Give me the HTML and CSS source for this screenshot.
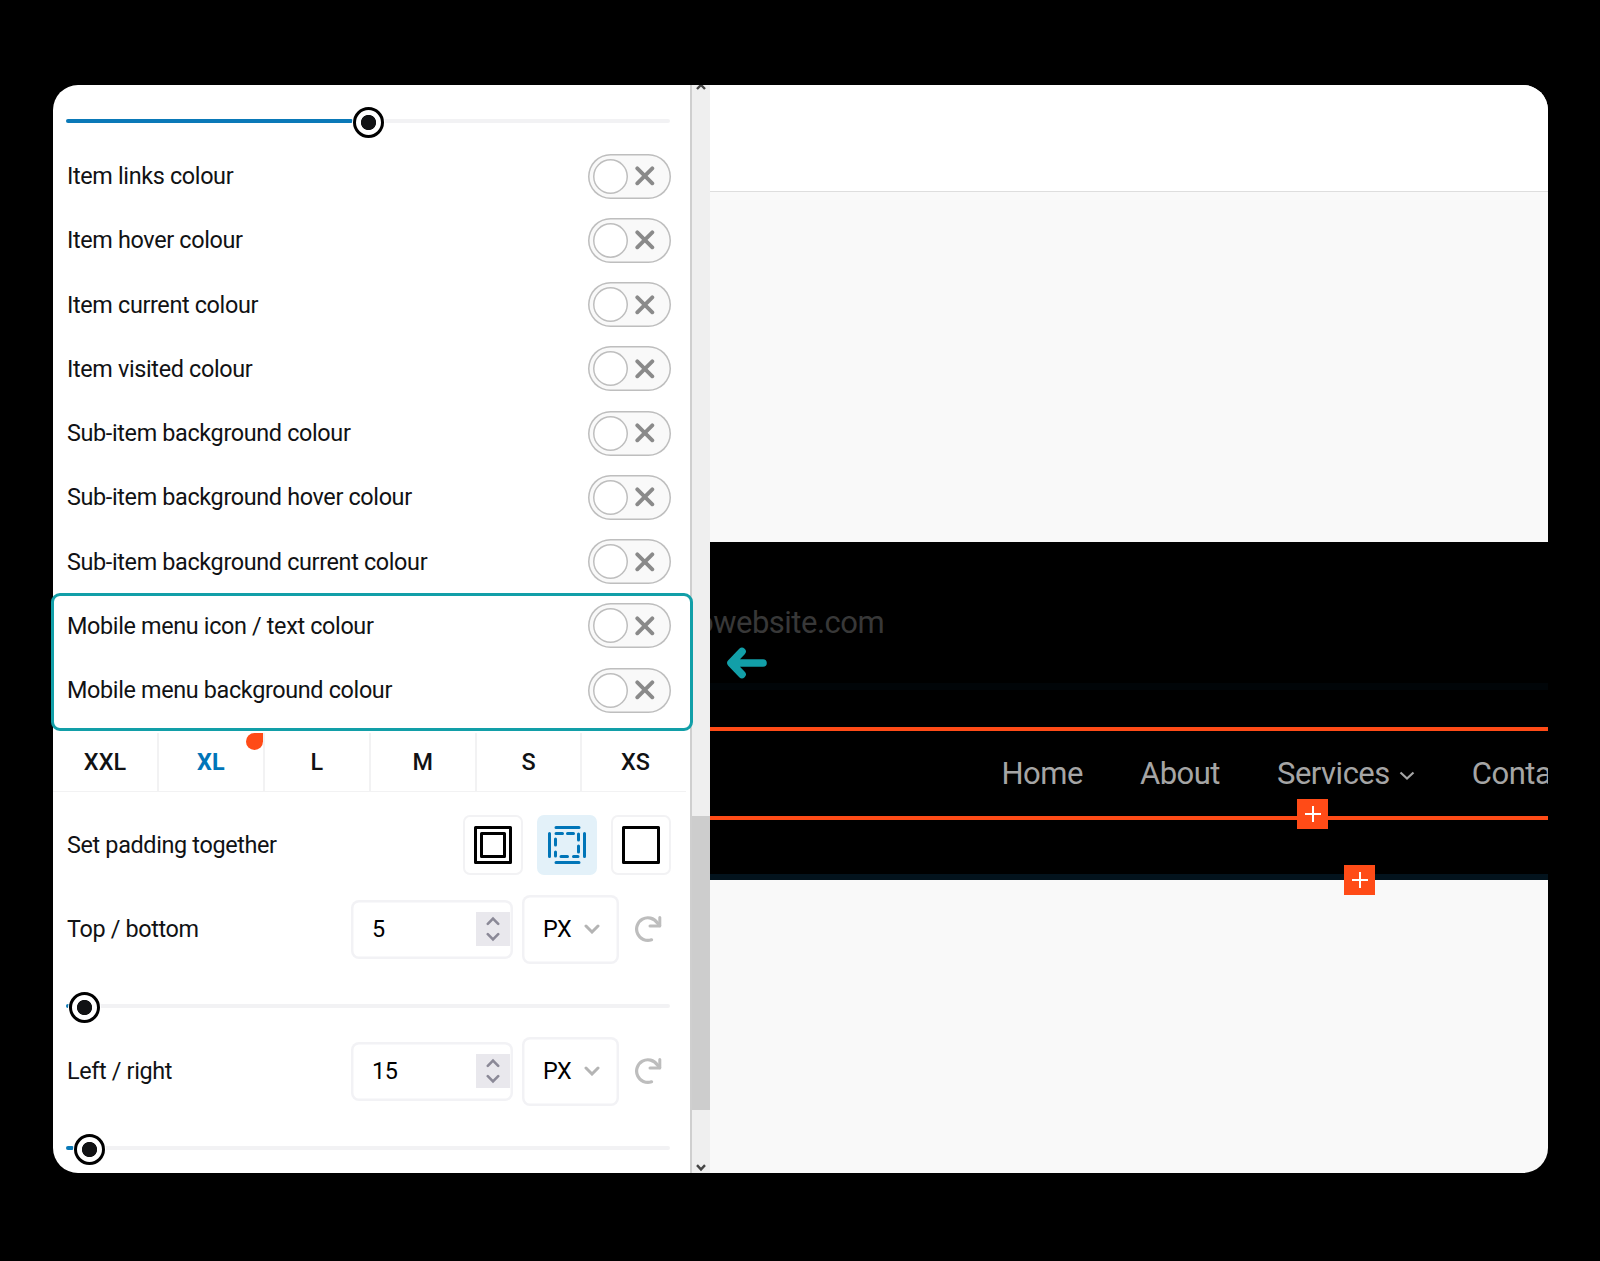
FILE: index.html
```html
<!DOCTYPE html>
<html lang="en">
<head>
    <meta charset="UTF-8">
    <title>Menu settings</title>
    <link rel="stylesheet" href="styles.css">
</head>
<body>

<svg class="sprite">
    <symbol id="cross" viewBox="0 0 20 20">
        <path d="M2.3 2.3L17.3 17.3M17.3 2.3L2.3 17.3" fill="none" stroke="#8a8a8a" stroke-width="3.9" stroke-linecap="round"/>
    </symbol>
    <symbol id="chevron" viewBox="0 0 16 10">
        <path d="M2 2L8 8L14 2" fill="none" stroke="currentColor" stroke-width="3" stroke-linecap="round"/>
    </symbol>
    <symbol id="caret" viewBox="0 0 16 10">
        <path d="M1.5 1.5L8 7.5L14.5 1.5" fill="none" stroke="currentColor" stroke-width="2.2"/>
    </symbol>
    <symbol id="spin" viewBox="0 0 14 26">
        <path d="M1.8 7.8L7 2.6L12.2 7.8M1.8 18.2L7 23.4L12.2 18.2" fill="none" stroke="#8b8997" stroke-width="2.6" stroke-linecap="round"/>
    </symbol>
    <symbol id="reset" viewBox="0 0 27 28">
        <path d="M16.5 24.8A11.3 11.3 0 1 1 22.3 7.8L24.5 10.5" fill="none" stroke="#bdbdbd" stroke-width="3.2" stroke-linecap="round"/>
        <path d="M24.8 2.5V11H15" fill="none" stroke="#bdbdbd" stroke-width="3" stroke-linecap="round" stroke-linejoin="round"/>
    </symbol>
    <symbol id="plus" viewBox="0 0 16 16">
        <path d="M8 0V16M0 8H16" stroke="#fff" stroke-width="2"/>
    </symbol>
</svg>

<div class="window">
    <section class="panel">
        <div class="slider first">
            <div class="fill" style="width: 287px"></div>
            <div class="thumb" style="left: 287px"></div>
        </div>

        <div class="row"><span>Item links colour</span><div class="toggle"><i></i><svg><use href="#cross"/></svg></div></div>
        <div class="row"><span>Item hover colour</span><div class="toggle"><i></i><svg><use href="#cross"/></svg></div></div>
        <div class="row"><span>Item current colour</span><div class="toggle"><i></i><svg><use href="#cross"/></svg></div></div>
        <div class="row"><span>Item visited colour</span><div class="toggle"><i></i><svg><use href="#cross"/></svg></div></div>
        <div class="row"><span>Sub-item background colour</span><div class="toggle"><i></i><svg><use href="#cross"/></svg></div></div>
        <div class="row"><span>Sub-item background hover colour</span><div class="toggle"><i></i><svg><use href="#cross"/></svg></div></div>
        <div class="row"><span>Sub-item background current colour</span><div class="toggle"><i></i><svg><use href="#cross"/></svg></div></div>
        <div class="highlight">
            <div class="row"><span>Mobile menu icon / text colour</span><div class="toggle"><i></i><svg><use href="#cross"/></svg></div></div>
            <div class="row"><span>Mobile menu background colour</span><div class="toggle"><i></i><svg><use href="#cross"/></svg></div></div>
        </div>

        <div class="tabs">
            <a>XXL</a>
            <a class="active">XL</a>
            <a>L</a>
            <a>M</a>
            <a>S</a>
            <a>XS</a>
        </div>

        <div class="padding-row">
            <span>Set padding together</span>
            <div class="choices">
                <div class="choice">
                    <svg width="38" height="38" viewBox="0 0 38 38">
                        <path d="M1.5 1.5H36.5V36.5H1.5ZM7.5 7.5H30.5V30.5H7.5Z" fill="none" stroke="#000" stroke-width="3" stroke-linejoin="round"/>
                    </svg>
                </div>
                <div class="choice selected">
                    <svg width="38" height="38" viewBox="0 0 38 38">
                        <path d="M8 1.5H31M8 36.5H31M1.5 7.5V30.5M36.5 7.5V30.5M8 7.5H14.5M19.5 7.5H25.5M30.5 8V14M30.5 20V26M30 30.5H25.5M19.5 30.5H13M7.5 30V26M7.5 19V13" fill="none" stroke="#0075b8" stroke-width="3" stroke-linecap="round"/>
                    </svg>
                </div>
                <div class="choice">
                    <svg width="38" height="38" viewBox="0 0 38 38">
                        <path d="M1.5 1.5H36.5V36.5H1.5Z" fill="none" stroke="#000" stroke-width="3" stroke-linejoin="round"/>
                    </svg>
                </div>
            </div>
        </div>

        <div class="field">
            <span>Top / bottom</span>
            <div class="number">5<div class="spinner"><svg><use href="#spin"/></svg></div></div>
            <div class="unit">PX<svg><use href="#chevron"/></svg></div>
            <svg class="reset"><use href="#reset"/></svg>
        </div>
        <div class="slider">
            <div class="fill" style="width: 5px"></div>
            <div class="thumb" style="left: 3px"></div>
        </div>

        <div class="field second">
            <span>Left / right</span>
            <div class="number">15<div class="spinner"><svg><use href="#spin"/></svg></div></div>
            <div class="unit">PX<svg><use href="#chevron"/></svg></div>
            <svg class="reset"><use href="#reset"/></svg>
        </div>
        <div class="slider">
            <div class="fill" style="width: 8px"></div>
            <div class="thumb" style="left: 8.5px"></div>
        </div>
    </section>

    <div class="scrollbar">
        <svg class="up" width="10" height="5" viewBox="0 0 10 5"><path d="M1 4L5 0L9 4" fill="none" stroke="#444" stroke-width="2.4"/></svg>
        <div class="bar"></div>
        <svg class="down" width="10" height="9" viewBox="0 0 10 9"><path d="M1 1.2L5 5.4L9 1.2" fill="none" stroke="#444" stroke-width="2.4"/></svg>
    </div>

    <section class="preview">
        <div class="topbar"></div>
        <div class="space"></div>
        <div class="site">
            <div class="contact">
                <p>owebsite.com</p>
                <svg class="arrow" width="42" height="32" viewBox="0 0 42 32"><path d="M16 4.5L5 16L16 27.5M6 16H37" fill="none" stroke="#129fa8" stroke-width="7.6" stroke-linecap="round" stroke-linejoin="round"/></svg>
            </div>
            <div class="divider"></div>
            <nav>
                <a>Home</a>
                <a>About</a>
                <a>Services<svg><use href="#caret"/></svg></a>
                <a>Contact</a>
                <div class="add add-item"><svg><use href="#plus"/></svg></div>
            </nav>
            <div class="add add-row"><svg><use href="#plus"/></svg></div>
        </div>
    </section>
</div>

</body>
</html>
```
FILE: styles.css
```css
body {
    background: #000;
    color: #111214;
    font-family: Roboto, sans-serif;
    font-size: 23.4px;
    height: 1261px;
    margin: 0;
    overflow: hidden;
}
.sprite {
    display: none;
}
.window {
    display: flex;
    height: 1088px;
    margin: 85px auto 0 53px;
    width: 1495px;
}
.panel {
    background: #fff;
    border-radius: 25px 0 0 25px;
    box-sizing: border-box;
    padding-top: 34px;
    width: 637px;
}
.panel span {
    letter-spacing: -0.35px;
}
.slider {
    background: #f2f2f4;
    border-radius: 2px;
    height: 4px;
    margin-left: 12.5px;
    position: relative;
    width: 604px;
}
.slider.first {
    margin-bottom: 21px;
}
.fill {
    background: #0a79b8;
    border-radius: 2px;
    height: 4px;
}
.thumb {
    background: radial-gradient(circle, #111214 7.2px, #fff 8px);
    border: 3px solid #000;
    border-radius: 50%;
    box-shadow: 0 0 0 1px #fff;
    box-sizing: border-box;
    height: 31px;
    position: absolute;
    top: -12px;
    width: 31px;
}
.row {
    align-items: center;
    box-sizing: border-box;
    display: flex;
    height: 64.25px;
    justify-content: space-between;
    padding: 0 19px 0 14px;
}
.toggle {
    align-items: center;
    background: #f9f9f9;
    border-radius: 23px;
    box-shadow: inset 0 0 0 1.5px #bebebe;
    box-sizing: border-box;
    display: flex;
    gap: 6.5px;
    height: 45px;
    padding-left: 5px;
    width: 83px;
}
.toggle i {
    background: #fff;
    border-radius: 50%;
    box-shadow: inset 0 0 0 1.5px #bebebe;
    height: 35px;
    width: 35px;
}
.toggle svg {
    height: 20px;
    width: 20px;
}
.highlight {
    position: relative;
}
.highlight::after {
    border: 3px solid #129fa8;
    border-radius: 9px;
    bottom: -9px;
    box-sizing: border-box;
    content: "";
    left: -2.5px;
    position: absolute;
    right: -2.5px;
    top: -1px;
    z-index: 2;
}
.tabs {
    border-bottom: 1px solid #f2f2f3;
    display: flex;
    margin-top: 10.5px;
    width: 633px;
}
.tabs a {
    border-right: 2px solid #f2f2f3;
    box-sizing: border-box;
    flex: none;
    font-weight: 500;
    line-height: 58px;
    position: relative;
    text-align: center;
    width: 105.9px;
}
.tabs a:last-child {
    border-right: none;
}
.tabs .active {
    color: #0075b8;
    font-weight: 700;
}
.tabs .active::after {
    background: #ff4b17;
    border-radius: 50% 0 50% 50%;
    content: "";
    height: 17px;
    position: absolute;
    right: 0;
    top: 0;
    width: 17px;
}
.padding-row {
    align-items: center;
    display: flex;
    height: 60px;
    justify-content: space-between;
    padding: 23px 19px 0 14px;
}
.choices {
    display: flex;
    gap: 14px;
}
.choice {
    align-items: center;
    border: 2px solid #f2f2f4;
    border-radius: 7px;
    box-sizing: border-box;
    display: flex;
    height: 60px;
    justify-content: center;
    width: 60px;
}
.choice.selected {
    background: #e3f1f9;
    border-color: #e3f1f9;
}
.field {
    align-items: center;
    display: flex;
    height: 69px;
    margin: 20px 0 40px;
    padding: 0 28px 0 14px;
}
.field.second {
    margin: 29px 0 40px;
}
.field span {
    flex: 1;
}
.number {
    align-items: center;
    border-radius: 8px;
    box-shadow: inset 0 0 0 2.5px #f2f2f5;
    box-sizing: border-box;
    color: #000;
    display: flex;
    height: 59px;
    justify-content: space-between;
    letter-spacing: -0.3px;
    padding: 0 2.5px 0 21.5px;
    width: 162px;
}
.spinner {
    align-items: center;
    background: #e9e8ed;
    display: flex;
    height: 34px;
    justify-content: center;
    width: 34px;
}
.spinner svg {
    height: 26px;
    width: 14px;
}
.unit {
    align-items: center;
    border-radius: 8px;
    box-shadow: inset 0 0 0 2.5px #f2f2f5;
    box-sizing: border-box;
    color: #000;
    display: flex;
    gap: 12.5px;
    height: 69px;
    letter-spacing: -0.3px;
    margin: 0 16.5px 0 9px;
    padding-left: 21.5px;
    width: 97px;
}
.unit svg {
    color: #b4b4b4;
    height: 10px;
    width: 16px;
}
.reset {
    height: 28px;
    width: 27px;
}
.scrollbar {
    align-items: center;
    background: #efefef;
    border-left: 2px solid #cfcfcf;
    box-sizing: border-box;
    display: flex;
    flex-direction: column;
    width: 19.5px;
}
.scrollbar .bar {
    background: #cdcdcd;
    height: 294px;
    margin-top: 726px;
    width: 18px;
}
.scrollbar .down {
    margin-top: auto;
}
.preview {
    background: #f9f9f9;
    border-radius: 0 25px 25px 0;
    flex: 1;
    overflow: hidden;
}
.topbar {
    background: #fff;
    border-bottom: 1.5px solid #dedede;
    height: 106px;
}
.space {
    height: 350px;
}
.site {
    background: #000;
    border-bottom: 6px solid #03131d;
    height: 332px;
    position: relative;
}
.contact {
    height: 141px;
    position: relative;
}
/* the site title is scrolled off to the left of the canvas */
.contact p {
    color: #383838;
    font-size: 31px;
    letter-spacing: -0.5px;
    line-height: 36px;
    margin: 0 0 0 -13.5px;
    padding-top: 63px;
    white-space: nowrap;
}
.arrow {
    left: 16.5px;
    position: absolute;
    top: 105px;
}
.divider {
    background: #010508;
    height: 7px;
    margin-bottom: 37px;
}
nav {
    border-bottom: 4px solid #ff4b17;
    border-top: 4px solid #ff4b17;
    color: #a5a5a5;
    display: flex;
    font-size: 31px;
    height: 85px;
    letter-spacing: -0.5px;
    line-height: 86px;
    padding-left: 292px;
    position: relative;
    white-space: nowrap;
}
nav a {
    margin-right: 57px;
}
nav a svg {
    height: 10px;
    margin: 0 0 3px 9px;
    width: 16px;
}
.add {
    align-items: center;
    background: #ff4b17;
    display: flex;
    height: 30px;
    justify-content: center;
    position: absolute;
    width: 31px;
}
.add svg {
    height: 16px;
    width: 16px;
}
.add-item {
    left: 587.5px;
    top: 68px;
}
.add-row {
    left: 634.5px;
    top: 323px;
}
```
